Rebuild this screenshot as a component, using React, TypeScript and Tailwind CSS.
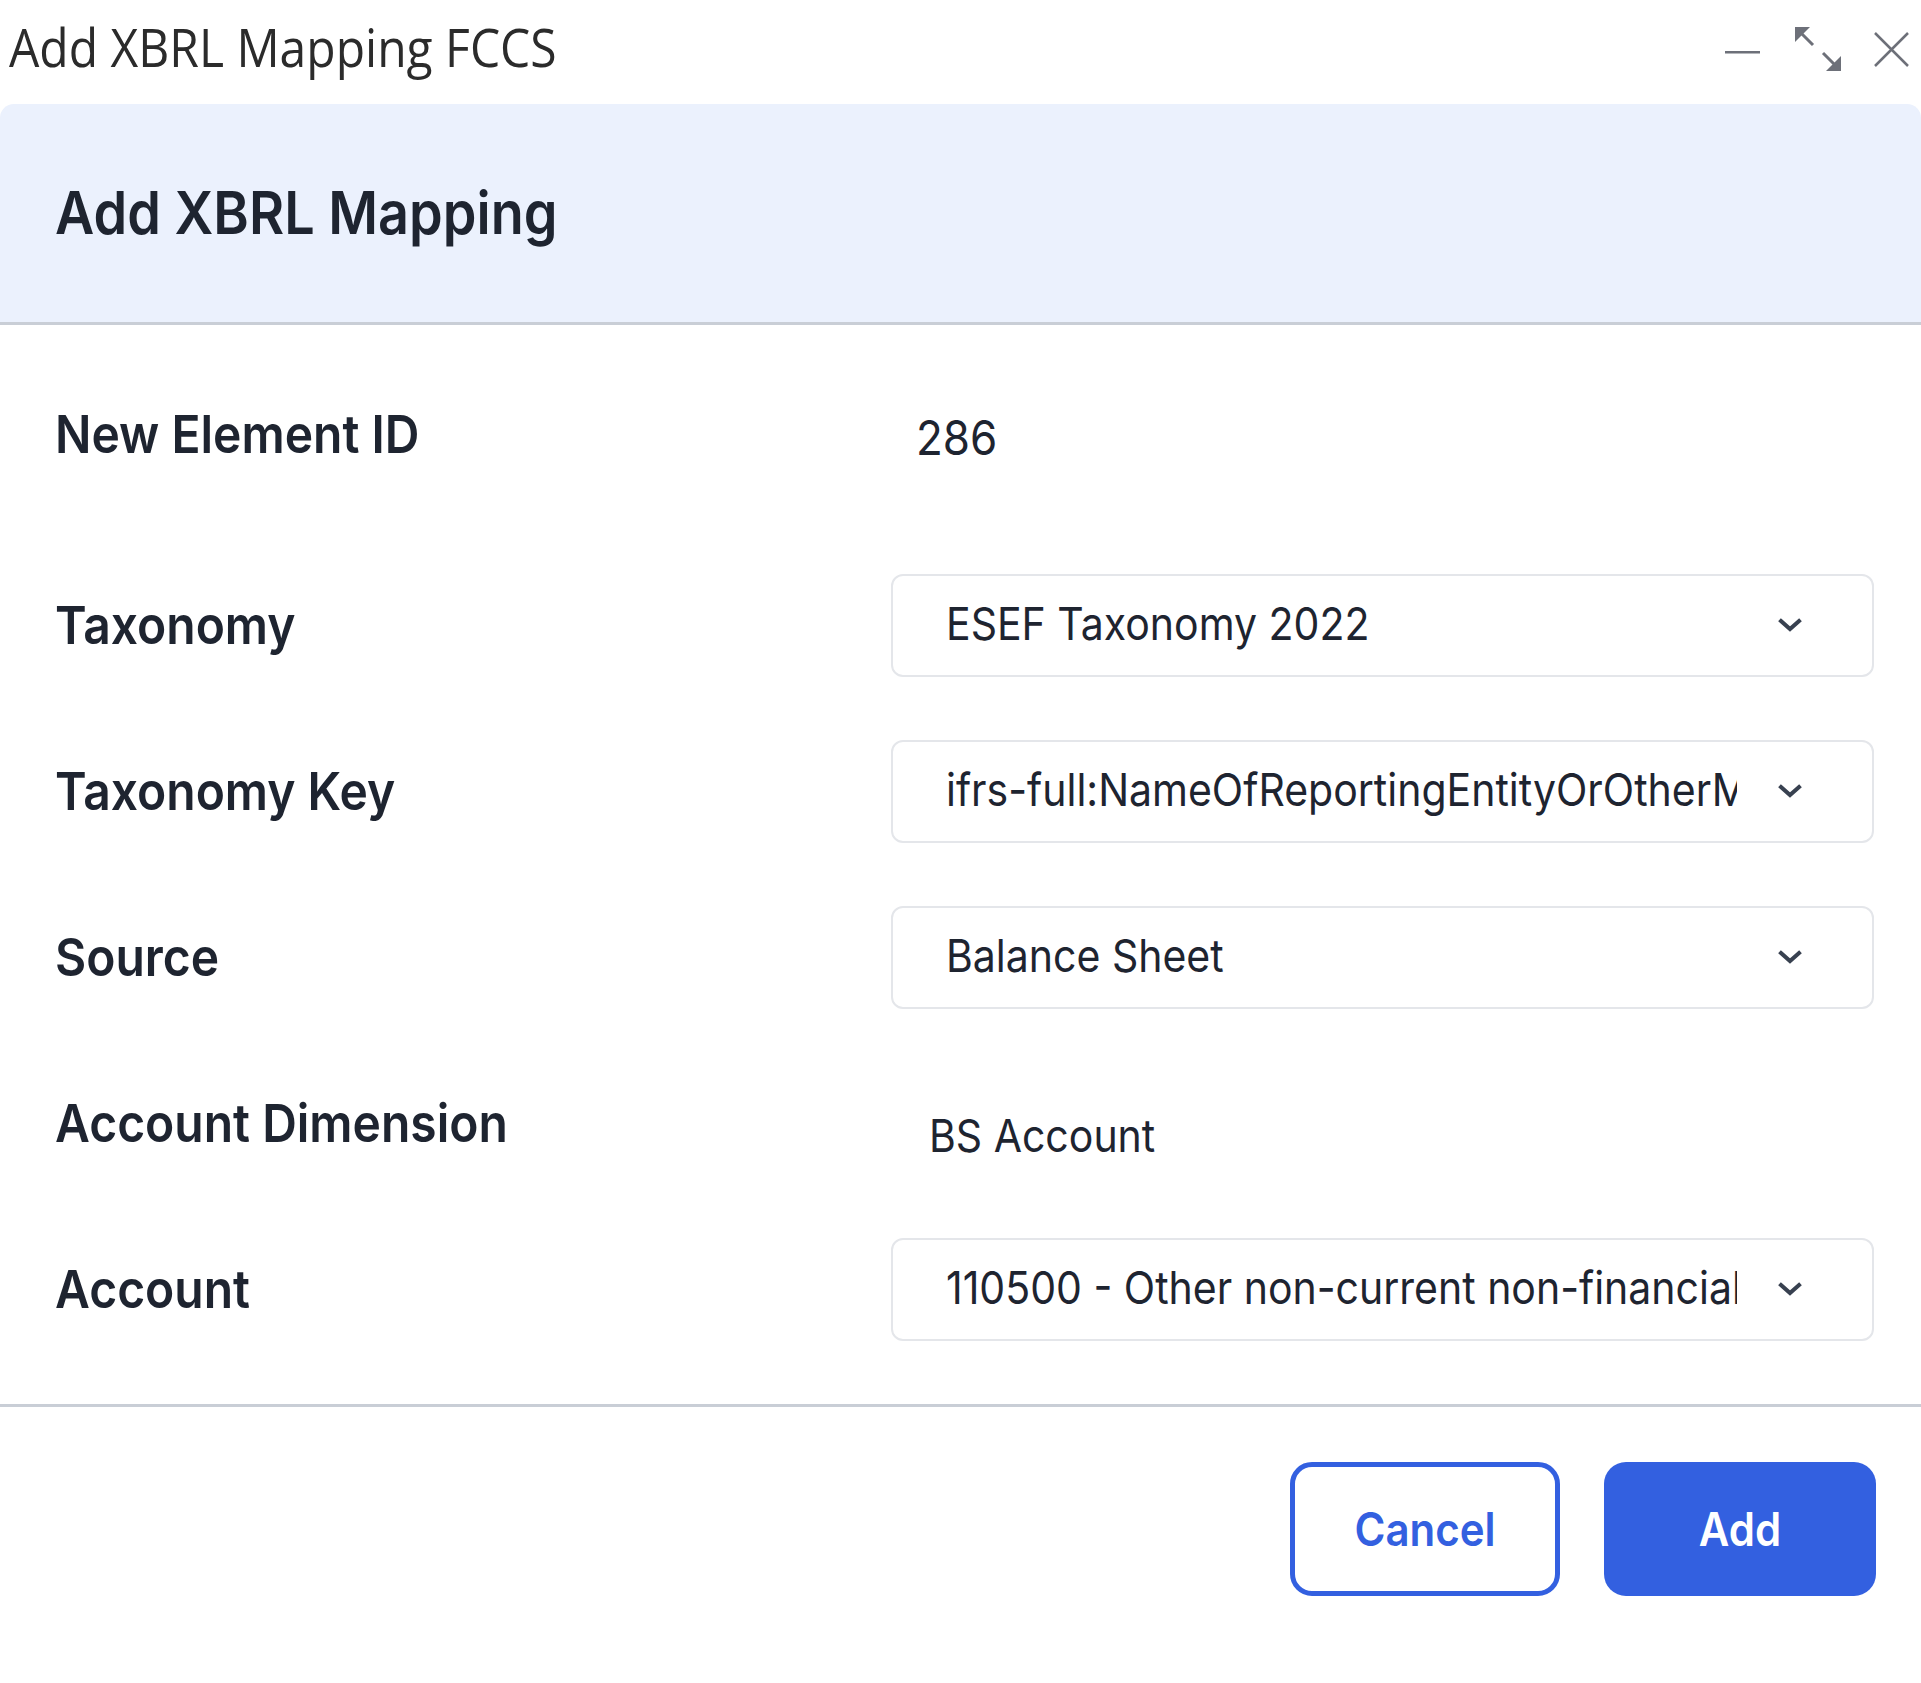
import React from 'react';

const INK = 'text-[#1e2430]';
const BLUE = '#3360e0';

// text in this dialog is drawn slightly tall
const T: React.FC<{ className?: string; children: React.ReactNode }> = ({ className = '', children }) => (
  <span className={`inline-block scale-y-110 ${className}`}>{children}</span>
);

const Chevron = () => (
  <svg width="24" height="16" viewBox="0 0 24 16" fill="none" stroke="#384150" strokeWidth="4" strokeLinecap="square" strokeLinejoin="miter">
    <path d="M3 4l9 8 9-8" />
  </svg>
);

interface SelectBoxProps {
  value: string;
}

const SelectBox: React.FC<SelectBoxProps> = ({ value }) => (
  <div className="h-[103px] w-full border-2 border-[#e4e6ea] rounded-[12px] bg-white flex items-center pl-[53px] pr-[70px]">
    <div className="flex-1 min-w-0 overflow-hidden whitespace-nowrap py-[10px]">
      <T className={`text-[41px] leading-[1.3] ${INK}`}>{value}</T>
    </div>
    <div className="ml-[41px] shrink-0 flex items-center">
      <Chevron />
    </div>
  </div>
);

interface FieldRowProps {
  label: string;
  height?: string;
  children: React.ReactNode;
}

const FieldRow: React.FC<FieldRowProps> = ({ label, height = 'h-[166px]', children }) => (
  <div className={`flex items-center ${height}`}>
    <div className="w-[836px] shrink-0">
      <T className={`text-[48px] font-semibold leading-none ${INK}`}>{label}</T>
    </div>
    <div className="flex-1 min-w-0 flex items-center">{children}</div>
  </div>
);

export default function App() {
  return (
    <div className="w-full min-h-[1683px] bg-white overflow-hidden" style={{ fontFamily: 'Inter, "Liberation Sans", sans-serif' }}>
      {/* window title bar */}
      <div className="h-[104px] flex items-center pl-[9px] pr-[12px]">
        <T className="text-[48px] leading-none text-[#2b2b2b] font-normal -mt-[10px]">
          <span style={{ fontFamily: '"Open Sans", sans-serif' }}>Add XBRL Mapping FCCS</span>
        </T>
        <div className="ml-auto flex items-center -mt-[6px]">
          <svg width="35" height="4" viewBox="0 0 35 4" className="mt-[6px]">
            <rect x="0" y="1" width="35" height="2.5" fill="#6d7079" />
          </svg>
          <svg width="46" height="44" viewBox="0 0 46 44" className="ml-[35px]" fill="#6d7079" stroke="#6d7079">
            <path d="M6 6l12 12" strokeWidth="3" />
            <polygon points="0,0 15,0 0,15" stroke="none" />
            <path d="M28 26l12 12" strokeWidth="3" />
            <polygon points="46,44 31,44 46,29" stroke="none" />
          </svg>
          <svg width="35" height="35" viewBox="0 0 35 35" className="ml-[33px]" stroke="#6d7079" strokeWidth="2.5">
            <path d="M1 1l33 33M34 1L1 34" />
          </svg>
        </div>
      </div>

      {/* dialog header */}
      <div className="h-[221px] bg-[#ebf1fd] rounded-t-[14px] border-b-[3px] border-[#c9ced6] flex items-center pl-[55px]">
        <T className={`text-[54px] font-semibold leading-none ${INK}`}>Add XBRL Mapping</T>
      </div>

      {/* form body */}
      <div className="pl-[55px] pr-[47px]">
        <FieldRow label="New Element ID" height="h-[217px]">
          <T className={`ml-[25px] mt-[6px] text-[44px] leading-none ${INK}`}>286</T>
        </FieldRow>
        <FieldRow label="Taxonomy">
          <SelectBox value="ESEF Taxonomy 2022" />
        </FieldRow>
        <FieldRow label="Taxonomy Key">
          <SelectBox value="ifrs-full:NameOfReportingEntityOrOtherMeansOfIdentification" />
        </FieldRow>
        <FieldRow label="Source">
          <SelectBox value="Balance Sheet" />
        </FieldRow>
        <FieldRow label="Account Dimension">
          <T className={`ml-[38px] mt-[26px] text-[41px] leading-none ${INK}`}>BS Account</T>
        </FieldRow>
        <FieldRow label="Account">
          <SelectBox value="110500 - Other non-current non-financial assets" />
        </FieldRow>
      </div>

      {/* footer actions */}
      <div className="mt-[32px] border-t-[3px] border-[#c9ced6] flex justify-end gap-[44px] pt-[55px] pr-[45px]">
        <button
          className="w-[270px] h-[134px] rounded-[22px] border-[5px] bg-white flex items-center justify-center"
          style={{ borderColor: BLUE, color: BLUE }}
        >
          <T className="text-[42px] font-semibold leading-none">Cancel</T>
        </button>
        <button
          className="w-[272px] h-[134px] rounded-[22px] text-white flex items-center justify-center"
          style={{ backgroundColor: BLUE }}
        >
          <T className="text-[42px] font-semibold leading-none">Add</T>
        </button>
      </div>
    </div>
  );
}
